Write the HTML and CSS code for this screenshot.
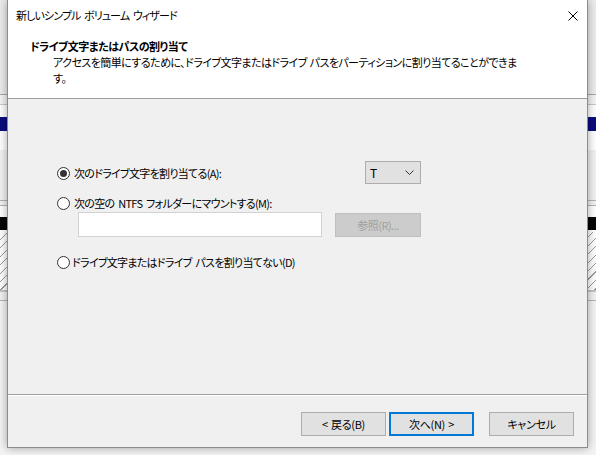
FILE: index.html
```html
<!DOCTYPE html>
<html lang="ja">

<head>
  <meta charset="UTF-8" />
  <meta name="viewport" content="width=device-width, initial-scale=1.0" />
  <title>新しいシンプル ボリューム ウィザード</title>
  <link rel="stylesheet" href="styles.css">
</head>

<body>
  <div class="wizard">
    <!-- タイトルバー -->
    <div class="titlebar">
      <span class="caption">新しいシンプル ボリューム ウィザード</span>
      <svg class="close" width="10" height="10" viewBox="0 0 10 10">
        <path d="M0.5 0.5 L9.5 9.5 M9.5 0.5 L0.5 9.5" stroke="#000" stroke-width="1" fill="none" />
      </svg>
    </div>

    <!-- ヘッダー -->
    <div class="header">
      <p class="heading">ドライブ文字またはパスの割り当て</p>
      <p class="desc">アクセスを簡単にするために、ドライブ文字またはドライブ パスをパーティションに割り当てることができま<br>す。</p>
    </div>

    <!-- 本文 -->
    <div class="content">
      <div class="options">
        <div class="row first">
          <label class="radio"><span class="dot checked"></span>次のドライブ文字を割り当てる(A):</label>
          <div class="combo">
            <span>T</span>
            <svg width="9" height="6" viewBox="0 0 9 6">
              <path d="M0.5 0.5 L4.5 4.5 L8.5 0.5" stroke="#333" stroke-width="1" fill="none" />
            </svg>
          </div>
        </div>
        <div class="row second">
          <label class="radio"><span class="dot"></span>次の空の NTFS フォルダーにマウントする(M):</label>
        </div>
        <div class="row third">
          <div class="path"></div>
          <div class="browse">参照(R)...</div>
        </div>
        <div class="row fourth">
          <label class="radio tight"><span class="dot"></span>ドライブ文字またはドライブ パスを割り当てない(D)</label>
        </div>
      </div>
    </div>

    <!-- ボタン -->
    <div class="footer">
      <button class="btn">&lt; 戻る(B)</button>
      <button class="btn default">次へ(N) &gt;</button>
      <button class="btn cancel">キャンセル</button>
    </div>
  </div>
</body>

</html>
```

FILE: styles.css
```css
body {
  width: 596px;
  height: 455px;
  margin: 0;
  padding: 0;
  overflow: hidden;
  font-family: "Noto Sans CJK JP", "Noto Sans", sans-serif;
  font-size: 11px;
  font-feature-settings: "palt";
  color: #000;
  /* 後ろのウィンドウ（ディスクの管理） */
  background:
    repeating-linear-gradient(135deg, #fff 0 5px, #9a9a9a 5px 6px) 0 232px / 596px 58px no-repeat,
    linear-gradient(to bottom,
      #ececec 0 94px, #a8a8a8 94px 95px, #f4f4f4 95px 104px, #c8c8c8 104px 105px,
      #fff 105px 117px, #0c0c7e 117px 131px, #fff 131px 150px, #f2f2f2 150px 200px,
      #b4b4b4 200px 201px, #f2f2f2 201px 205px, #b4b4b4 205px 206px, #fff 206px 217px,
      #050505 217px 230px, #fff 230px 290px, #c4c4c4 290px 292px, #f2f2f2 292px 300px,
      #b4b4b4 300px 301px, #f4f4f4 301px);
}

p {
  margin: 0;
}

/* ダイアログ本体 */
.wizard {
  width: 579px;
  height: 447px;
  margin-left: 7px;
  border: 1px solid #8c8c8c;
  border-top: 0;
  background-color: #f0f0f0;
  box-shadow: 0 0 9px rgba(0, 0, 0, 0.35);
  display: flex;
  flex-direction: column;
}

.titlebar {
  height: 30px;
  display: flex;
  align-items: center;
  justify-content: space-between;
  padding: 0 9px 0 8px;
  background-color: #fff;
  letter-spacing: -0.9px;
  word-spacing: 2px;
}

.titlebar .close {
  margin-top: 2px;
}

.header {
  height: 60px;
  padding: 8px 0 0 22px;
  background-color: #fff;
  border-bottom: 1px solid #a0a0a0;
  line-height: 16px;
  white-space: nowrap;
}

.header .heading {
  font-weight: bold;
  letter-spacing: -0.5px;
}

.header .desc {
  padding-left: 23px;
  letter-spacing: -0.55px;
  word-spacing: 1px;
}

.content {
  flex: 1;
  padding: 62px 0 0 49px;
}

.options {
  width: 364px;
}

.row {
  display: flex;
  align-items: center;
}

.row.first {
  height: 23px;
  justify-content: space-between;
}

.row.second {
  height: 16px;
  margin-top: 11px;
}

.row.third {
  height: 25px;
  margin-top: 1px;
  justify-content: space-between;
}

.row.fourth {
  height: 16px;
  margin-top: 17px;
}

.radio {
  display: flex;
  align-items: center;
  gap: 4px;
  line-height: 16px;
  letter-spacing: -0.7px;
  word-spacing: 2px;
  white-space: nowrap;
}

.radio.tight {
  gap: 2px;
}

.dot {
  position: relative;
  flex: none;
  width: 11px;
  height: 11px;
  border: 1px solid #333;
  border-radius: 50%;
  background-color: #fff;
}

.row.first .dot {
  margin-top: 2px;
}

.dot.checked::after {
  content: "";
  position: absolute;
  left: 2px;
  top: 2px;
  width: 7px;
  height: 7px;
  border-radius: 50%;
  background-color: #333;
}

.combo {
  width: 44px;
  height: 21px;
  border: 1px solid #adadad;
  background-color: #e1e1e1;
  display: flex;
  align-items: center;
  justify-content: space-between;
  padding: 0 6px 0 4px;
  font-size: 12px;
}

.path {
  width: 242px;
  height: 23px;
  margin-left: 21px;
  border: 1px solid #d2d2d2;
  background-color: #fff;
}

.browse {
  width: 84px;
  height: 22px;
  border: 1px solid #bfbfbf;
  background-color: #cccccc;
  color: #a0a0a0;
  text-align: center;
  line-height: 22px;
  letter-spacing: -0.5px;
}

.footer {
  height: 53px;
  border-top: 1px solid #a0a0a0;
  box-shadow: inset 0 1px 0 #fff;
  display: flex;
  justify-content: flex-end;
  align-items: flex-start;
  padding: 17px 13px 0 0;
  box-sizing: border-box;
}

.btn {
  width: 85px;
  height: 24px;
  margin: 0 0 0 3px;
  padding: 0;
  border: 1px solid #adadad;
  background-color: #e1e1e1;
  font-family: inherit;
  font-size: 11px;
  font-feature-settings: "palt";
  letter-spacing: -0.3px;
  word-spacing: 1px;
  color: #000;
}

.btn.default {
  border: 2px solid #0078d7;
}

.btn.cancel {
  margin-left: 15px;
}
```
